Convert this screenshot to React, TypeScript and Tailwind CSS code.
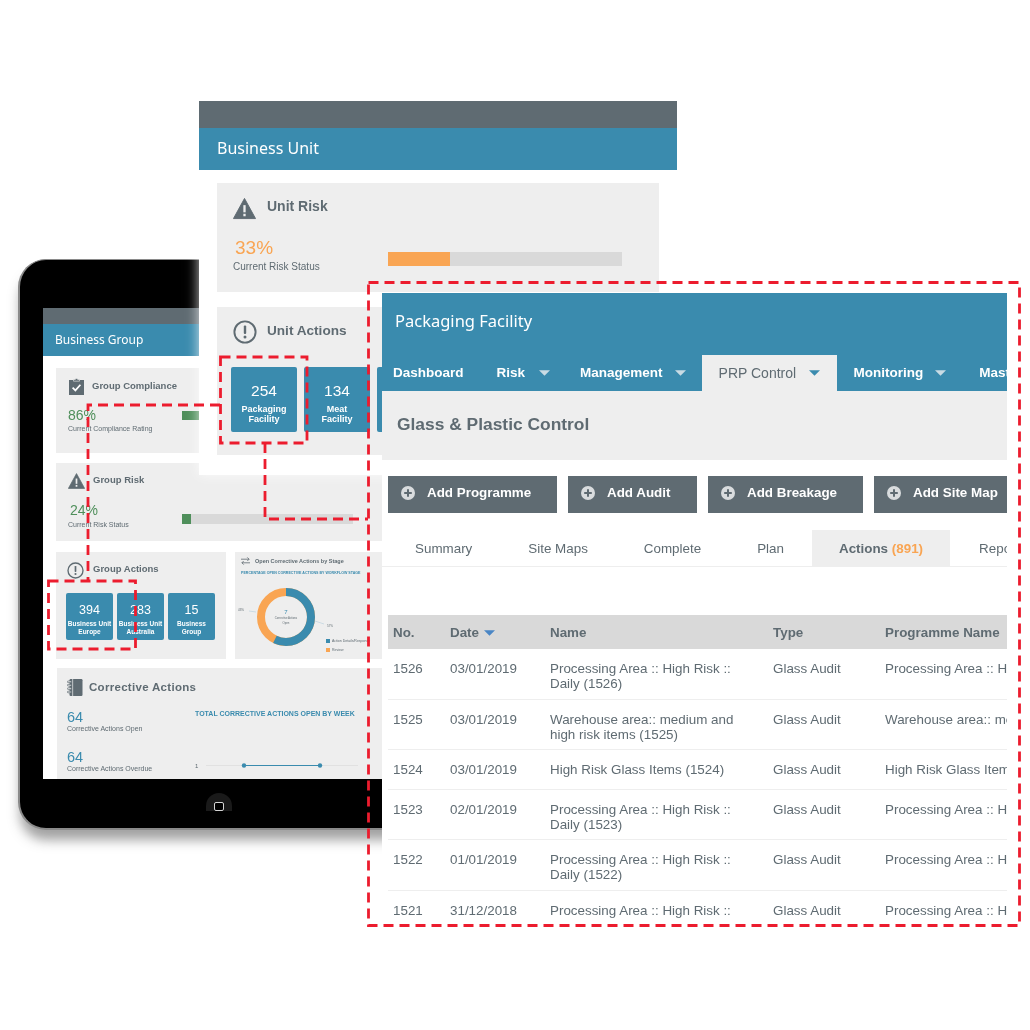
const sans = "font-['Liberation_Sans',Arial,sans-serif]"
const title = "font-['Noto_Sans',sans-serif]"

function WarningIcon({ className }: { className: string }) {
  return (
    <svg viewBox="0 0 24 22" className={className}>
      <path d="M12 0.5 L23.5 21.5 H0.5 Z" fill="#5f6b72" stroke="#5f6b72" strokeLinejoin="round" />
      <rect x="10.8" y="7.5" width="2.4" height="7.5" fill="#eeeeee" />
      <rect x="10.8" y="16.5" width="2.4" height="2.6" fill="#eeeeee" />
    </svg>
  )
}

function AlertIcon({ className }: { className: string }) {
  return (
    <svg viewBox="0 0 24 24" className={className}>
      <circle cx="12" cy="12" r="10.6" fill="none" stroke="#5f6b72" strokeWidth="1.9" />
      <rect x="10.8" y="5.5" width="2.4" height="8.5" rx="1" fill="#5f6b72" />
      <circle cx="12" cy="17" r="1.5" fill="#5f6b72" />
    </svg>
  )
}

function ClipboardIcon() {
  return (
    <svg viewBox="0 0 15 17" className="w-[15px] h-[17px] ml-[1px] shrink-0">
      <rect x="0" y="2" width="15" height="15" fill="#5f6b72" />
      <path d="M4.5 3.2 V1.4 H6.3 C6.5 0.2 8.5 0.2 8.7 1.4 H10.5 V3.2 Z" fill="#5f6b72" stroke="#eeeeee" strokeWidth="0.6" />
      <path d="M3.6 9.6 L6.4 12.4 L11.4 6.8" fill="none" stroke="#ffffff" strokeWidth="1.7" />
    </svg>
  )
}

function NotebookIcon() {
  return (
    <svg viewBox="0 0 16 17" className="w-[16px] h-[17px]">
      <rect x="2.5" y="0" width="13" height="17" rx="1.2" fill="#5f6b72" />
      <rect x="5.4" y="0" width="0.7" height="17" fill="#eeeeee" />
      <g fill="#eeeeee" stroke="#5f6b72" strokeWidth="0.7">
        <rect x="0.4" y="2" width="4" height="1.6" rx="0.7" />
        <rect x="0.4" y="5.4" width="4" height="1.6" rx="0.7" />
        <rect x="0.4" y="8.8" width="4" height="1.6" rx="0.7" />
        <rect x="0.4" y="12.2" width="4" height="1.6" rx="0.7" />
      </g>
    </svg>
  )
}

function Caret({ color = "#c9dbe4" }: { color?: string }) {
  return (
    <svg viewBox="0 0 10 5" className="w-[11px] h-[6px] shrink-0 block">
      <path d="M0 0 H10 L5 5 Z" fill={color} />
    </svg>
  )
}

function AddButton({ label, width }: { label: string; width: string }) {
  return (
    <div className={`${width} h-[37px] shrink-0 bg-[#5f6b72] flex items-center pl-[13px] pb-[3px] text-white text-[13.4px] font-bold`}>
      <svg viewBox="0 0 14 14" className="w-[14px] h-[14px] shrink-0 mr-[12px]">
        <circle cx="7" cy="7" r="7" fill="#d9dcde" />
        <path d="M7 3.2 V10.8 M3.2 7 H10.8" stroke="#5f6b72" strokeWidth="2" />
      </svg>
      <span className="whitespace-nowrap">{label}</span>
    </div>
  )
}

function ActionTile({ n, a, b }: { n: string; a: string; b: string }) {
  return (
    <div className="w-[47px] h-[47px] shrink-0 bg-[#3a8bae] rounded-[2px] text-white flex flex-col items-center justify-center text-center pt-[6px]">
      <div className="text-[12.5px] leading-[15px]">{n}</div>
      <div className="text-[6.5px] font-bold leading-[8px] mt-[2px] whitespace-nowrap">{a}</div>
      <div className="text-[6.5px] font-bold leading-[8px] whitespace-nowrap">{b}</div>
    </div>
  )
}

function UnitTile({ n, a, b }: { n: string; a: string; b: string }) {
  return (
    <div className="w-[66px] h-[65px] shrink-0 bg-[#3a8bae] rounded-[2px] text-white flex flex-col items-center justify-center text-center pt-[7px]">
      <div className="text-[15.5px] leading-[18px]">{n}</div>
      <div className="text-[9px] font-bold leading-[10.5px] mt-[4px]">{a}</div>
      <div className="text-[9px] font-bold leading-[10.5px]">{b}</div>
    </div>
  )
}

function Tablet() {
  return (
    <div className="absolute left-[18px] top-[259px] w-[420px] h-[571px] bg-black rounded-[28px] border-l-2 border-t border-b-2 border-[#8a8a8a] shadow-[0_12px_12px_-2px_rgba(70,70,70,0.5)] blur-[0.4px]">
      <div className="ml-[23px] mt-[48px] w-[370px] h-[471px] bg-white overflow-hidden">
        <div className="h-[16px] bg-[#5f6b72]" />
        <div className={`h-[32px] bg-[#3a8bae] text-white text-[12px] flex items-center pl-[12px] ${title}`}>Business Group</div>
        <div className="pl-[13px] pt-[12px] flex flex-col">
          <div className="h-[85px] bg-[#eeeeee] pl-[12px] pt-[10px] text-[#5f6b72]">
            <div className="flex items-start gap-[8px]">
              <ClipboardIcon />
              <span className="text-[9.5px] font-bold mt-[1px]">Group Compliance</span>
            </div>
            <div className="flex">
              <div className="w-[114px]">
                <div className="text-[#4f8f5b] text-[14px] leading-[16px] mt-[12px]">86%</div>
                <div className="text-[7px] leading-[10px] mt-[1px]">Current Compliance Rating</div>
              </div>
              <div className="mt-[16px] w-[171px] h-[9px] bg-[#d9d9d9]">
                <div className="w-[147px] h-full bg-[#4f8f5b]" />
              </div>
            </div>
          </div>
          <div className="h-[78px] mt-[10px] bg-[#eeeeee] pl-[12px] pt-[10px] text-[#5f6b72]">
            <div className="flex items-start gap-[8px]">
              <WarningIcon className="w-[17px] h-[16px]" />
              <span className="text-[9.5px] font-bold">Group Risk</span>
            </div>
            <div className="flex">
              <div className="w-[114px]">
                <div className="text-[#4f8f5b] text-[14px] leading-[16px] mt-[13px] pl-[2px]">24%</div>
                <div className="text-[7px] leading-[10px] mt-[2px]">Current Risk Status</div>
              </div>
              <div className="mt-[25px] w-[171px] h-[10px] bg-[#d9d9d9]">
                <div className="w-[9px] h-full bg-[#4f8f5b]" />
              </div>
            </div>
          </div>
          <div className="flex mt-[11px] gap-[9px]">
            <div className="w-[170px] h-[107px] bg-[#eeeeee] pl-[10px] pt-[10px] text-[#5f6b72]">
              <div className="flex items-center gap-[9px] pl-[1px]">
                <AlertIcon className="w-[17px] h-[17px]" />
                <span className="text-[9.5px] font-bold -mt-[2px]">Group Actions</span>
              </div>
              <div className="flex gap-[4px] mt-[14px]">
                <ActionTile n="394" a="Business Unit" b="Europe" />
                <ActionTile n="283" a="Business Unit" b="Australia" />
                <ActionTile n="15" a="Business" b="Group" />
              </div>
            </div>
            <div className="flex-1 h-[107px] bg-[#eeeeee] pl-[6px] pt-[5px] text-[#5f6b72]">
              <div className="flex items-center gap-[5px]">
                <svg viewBox="0 0 10 8" className="w-[9px] h-[8px]">
                  <path d="M0 2 H9 M7 0 L9 2 L7 4 M10 6 H1 M3 4 L1 6 L3 8" fill="none" stroke="#5f6b72" strokeWidth="0.9" />
                </svg>
                <span className="text-[5.5px] font-bold whitespace-nowrap">Open Corrective Actions by Stage</span>
              </div>
              <div className="text-[3.6px] font-bold text-[#3a8bae] mt-[6px] whitespace-nowrap">PERCENTAGE OPEN CORRECTIVE ACTIONS BY WORKFLOW STAGE</div>
              <div className="flex mt-[6px]">
                <svg viewBox="0 0 104 68" className="w-[104px] h-[68px] shrink-0 overflow-visible">
                  <circle cx="45" cy="34" r="25" fill="none" stroke="#f9a553" strokeWidth="8" />
                  <circle cx="45" cy="34" r="25" fill="none" stroke="#3a8bae" strokeWidth="8" strokeDasharray="89.5 157.1" transform="rotate(-90 45 34)" />
                  <path d="M74 38 L83 41 M15 29 L8 28" stroke="#a9c9d8" strokeWidth="0.5" />
                  <text x="45" y="31" textAnchor="middle" fontSize="6" fill="#3a8bae">7</text>
                  <text x="45" y="36" textAnchor="middle" fontSize="2.8" fill="#5f6b72">Corrective Actions</text>
                  <text x="45" y="41" textAnchor="middle" fontSize="2.8" fill="#5f6b72">Open</text>
                  <text x="-3" y="28" fontSize="3" fill="#5f6b72">43%</text>
                  <text x="86" y="44" fontSize="3" fill="#5f6b72">57%</text>
                </svg>
                <div className="pt-[54px] -ml-[19px] text-[3.5px] leading-[9px] whitespace-nowrap">
                  <div className="flex items-center gap-[2px]"><span className="w-[4px] h-[4px] bg-[#3a8bae]" />Action Details/Response</div>
                  <div className="flex items-center gap-[2px]"><span className="w-[4px] h-[4px] bg-[#f9a553]" />Review</div>
                </div>
              </div>
            </div>
          </div>
          <div className="h-[120px] mt-[9px] ml-[1px] bg-[#eeeeee] pl-[10px] pt-[11px] text-[#5f6b72]">
            <div className="flex items-center gap-[6px]">
              <NotebookIcon />
              <span className="text-[11.5px] font-bold tracking-[0.3px]">Corrective Actions</span>
            </div>
            <div className="flex mt-[13px]">
              <div className="w-[128px]">
                <div className="text-[#3a8bae] text-[14.5px] leading-[16px]">64</div>
                <div className="text-[7px] leading-[8px]">Corrective Actions Open</div>
                <div className="text-[#3a8bae] text-[14.5px] leading-[16px] mt-[16px]">64</div>
                <div className="text-[7px] leading-[8px]">Corrective Actions Overdue</div>
              </div>
              <div className="w-[170px]">
                <div className="text-[7px] font-bold text-[#3a8bae] whitespace-nowrap">TOTAL CORRECTIVE ACTIONS OPEN BY WEEK</div>
                <svg viewBox="0 0 170 12" className="w-[170px] h-[12px] mt-[40px]">
                  <text x="0" y="8" fontSize="6" fill="#5f6b72">1</text>
                  <path d="M11 5.5 H163" stroke="#dddddd" strokeWidth="0.8" />
                  <path d="M49 5.5 H125" stroke="#3a8bae" strokeWidth="1.2" />
                  <circle cx="49" cy="5.5" r="2.2" fill="#3a8bae" />
                  <circle cx="125" cy="5.5" r="2.2" fill="#3a8bae" />
                </svg>
              </div>
            </div>
          </div>
        </div>
      </div>
      <div className="mt-[14px] ml-[186px] w-[26px] h-[18px] rounded-t-full bg-[#1a1a1a] flex items-end justify-center">
        <div className="w-[10px] h-[9px] rounded-[2px] border border-[#d5d5d5] bg-black" />
      </div>
    </div>
  )
}

function BusinessUnit() {
  return (
    <div className="absolute left-[199px] top-[101px] w-[478px] h-[374px] bg-white shadow-[0_0_12px_rgba(255,255,255,0.8)] blur-[0.4px]">
      <div className="h-[27px] bg-[#5f6b72]" />
      <div className={`h-[42px] bg-[#3a8bae] text-white text-[16px] flex items-center pl-[18px] pb-[2px] ${title}`}>Business Unit</div>
      <div className="px-[18px] pt-[13px]">
        <div className="h-[109px] bg-[#eeeeee] pl-[16px] pt-[14px] text-[#5f6b72]">
          <div className="flex items-start gap-[11px]">
            <WarningIcon className="w-[23px] h-[23px]" />
            <span className="text-[14px] font-bold leading-[18px]">Unit Risk</span>
          </div>
          <div className="flex">
            <div className="w-[155px]">
              <div className="text-[#f9a553] text-[19px] leading-[22px] mt-[17px] pl-[2px]">33%</div>
              <div className="text-[10px] leading-[14px] mt-[1px]">Current Risk Status</div>
            </div>
            <div className="mt-[32px] w-[234px] h-[14px] bg-[#d9d9d9]">
              <div className="w-[62px] h-full bg-[#f9a553]" />
            </div>
          </div>
        </div>
        <div className="h-[148px] mt-[15px] bg-[#eeeeee] pl-[14px] pt-[13px] text-[#5f6b72]">
          <div className="flex items-start gap-[10px] pl-[2px]">
            <AlertIcon className="w-[24px] h-[24px]" />
            <span className="text-[13.6px] font-bold leading-[18px] mt-[2px]">Unit Actions</span>
          </div>
          <div className="flex gap-[7px] mt-[23px]">
            <UnitTile n="254" a="Packaging" b="Facility" />
            <UnitTile n="134" a="Meat" b="Facility" />
            <div className="w-[66px] h-[65px] shrink-0 bg-[#3a8bae] rounded-[2px]" />
          </div>
        </div>
      </div>
    </div>
  )
}

const rows = [
  { no: "1526", date: "03/01/2019", name: ["Processing Area :: High Risk ::", "Daily (1526)"], prog: "Processing Area :: High Risk" },
  { no: "1525", date: "03/01/2019", name: ["Warehouse area:: medium and", "high risk items (1525)"], prog: "Warehouse area:: medium" },
  { no: "1524", date: "03/01/2019", name: ["High Risk Glass Items (1524)"], prog: "High Risk Glass Items" },
  { no: "1523", date: "02/01/2019", name: ["Processing Area :: High Risk ::", "Daily (1523)"], prog: "Processing Area :: High Risk" },
  { no: "1522", date: "01/01/2019", name: ["Processing Area :: High Risk ::", "Daily (1522)"], prog: "Processing Area :: High Risk" },
  { no: "1521", date: "31/12/2018", name: ["Processing Area :: High Risk ::", "Daily (1521)"], prog: "Processing Area :: High Risk" },
]

const cols = "grid grid-cols-[57px_100px_223px_112px_200px]"

function Packaging() {
  return (
    <div className="absolute left-[382px] top-[293px] w-[625px] h-[625px] bg-white overflow-hidden text-[#5f6b72] blur-[0.4px]">
      <div className="h-[98px] bg-[#3a8bae] flex flex-col justify-between text-white">
        <div className={`text-[16.5px] pl-[13px] pt-[16px] ${title}`}>Packaging Facility</div>
        <div className="h-[36px] flex items-center pl-[11px] text-[13.5px] font-bold whitespace-nowrap">
          <span>Dashboard</span>
          <span className="ml-[33px]">Risk</span>
          <span className="ml-[14px]"><Caret /></span>
          <span className="ml-[30px]">Management</span>
          <span className="ml-[12px]"><Caret /></span>
          <div className="ml-[16px] w-[135px] h-[36px] shrink-0 bg-[#eeeeee] text-[#5f6b72] font-normal flex items-center pl-[17px]">
            <span className="text-[14px]">PRP Control</span>
            <span className="ml-[13px]"><Caret color="#3a8bae" /></span>
          </div>
          <span className="ml-[17px]">Monitoring</span>
          <span className="ml-[12px]"><Caret /></span>
          <span className="ml-[33px]">Master</span>
        </div>
      </div>
      <div className="h-[69px] bg-[#eeeeee] flex items-center pl-[15px] pb-[2px] text-[17.4px] font-bold">Glass &amp; Plastic Control</div>
      <div className="flex gap-[11px] pl-[6px] mt-[16px]">
        <AddButton label="Add Programme" width="w-[169px]" />
        <AddButton label="Add Audit" width="w-[129px]" />
        <AddButton label="Add Breakage" width="w-[155px]" />
        <AddButton label="Add Site Map" width="w-[150px]" />
      </div>
      <div className="flex mt-[17px] h-[37px] border-b border-[#eeeeee] pl-[5px] text-[13.4px] whitespace-nowrap">
        <div className="px-[28px] pt-[3px] flex items-center">Summary</div>
        <div className="px-[28px] pt-[3px] flex items-center">Site Maps</div>
        <div className="px-[28px] pt-[3px] flex items-center">Complete</div>
        <div className="px-[28px] pt-[3px] flex items-center">Plan</div>
        <div className="px-[27px] pt-[3px] flex items-center bg-[#eeeeee] font-bold">Actions&nbsp;<span className="text-[#f9a553]">(891)</span></div>
        <div className="px-[29px] pt-[3px] flex items-center">Reports</div>
      </div>
      <div className="mt-[48px] ml-[6px]">
        <div className={`${cols} h-[34px] pt-[3px] bg-[#d9d9d9] items-center text-[13.4px] font-bold pl-[5px] whitespace-nowrap`}>
          <div>No.</div>
          <div className="flex items-center gap-[5px]">Date <Caret color="#4a86c5" /></div>
          <div>Name</div>
          <div>Type</div>
          <div>Programme Name</div>
        </div>
        {rows.map((r) => (
          <div key={r.no} className={`${cols} ${r.name.length > 1 ? "h-[50.5px]" : "h-[39.5px]"} pl-[5px] pt-[12px] border-b border-[#eeeeee] text-[13.4px] leading-[15px]`}>
            <div>{r.no}</div>
            <div>{r.date}</div>
            <div>
              {r.name.map((l) => (
                <div key={l} className="whitespace-nowrap">{l}</div>
              ))}
            </div>
            <div>Glass Audit</div>
            <div className="whitespace-nowrap">{r.prog}</div>
          </div>
        ))}
      </div>
    </div>
  )
}

export default function App() {
  return (
    <div className={`relative w-[1030px] h-[1030px] bg-white overflow-hidden ${sans}`}>
      <Tablet />
      <BusinessUnit />
      <Packaging />
      {/* red dashed callouts */}
      <svg viewBox="0 0 1030 1030" className="absolute inset-0 w-[1030px] h-[1030px] pointer-events-none">
        <g fill="none" stroke="#ec1c2e" strokeWidth="2.8" strokeDasharray="10 6">
          <rect x="368.5" y="282.5" width="651" height="643" />
          <rect x="220.5" y="357" width="86.5" height="86" />
          <rect x="48.5" y="581" width="87" height="68" />
          <path d="M220 405 H88 V581" />
          <path d="M265 443 V519 H368" />
        </g>
      </svg>
    </div>
  )
}
